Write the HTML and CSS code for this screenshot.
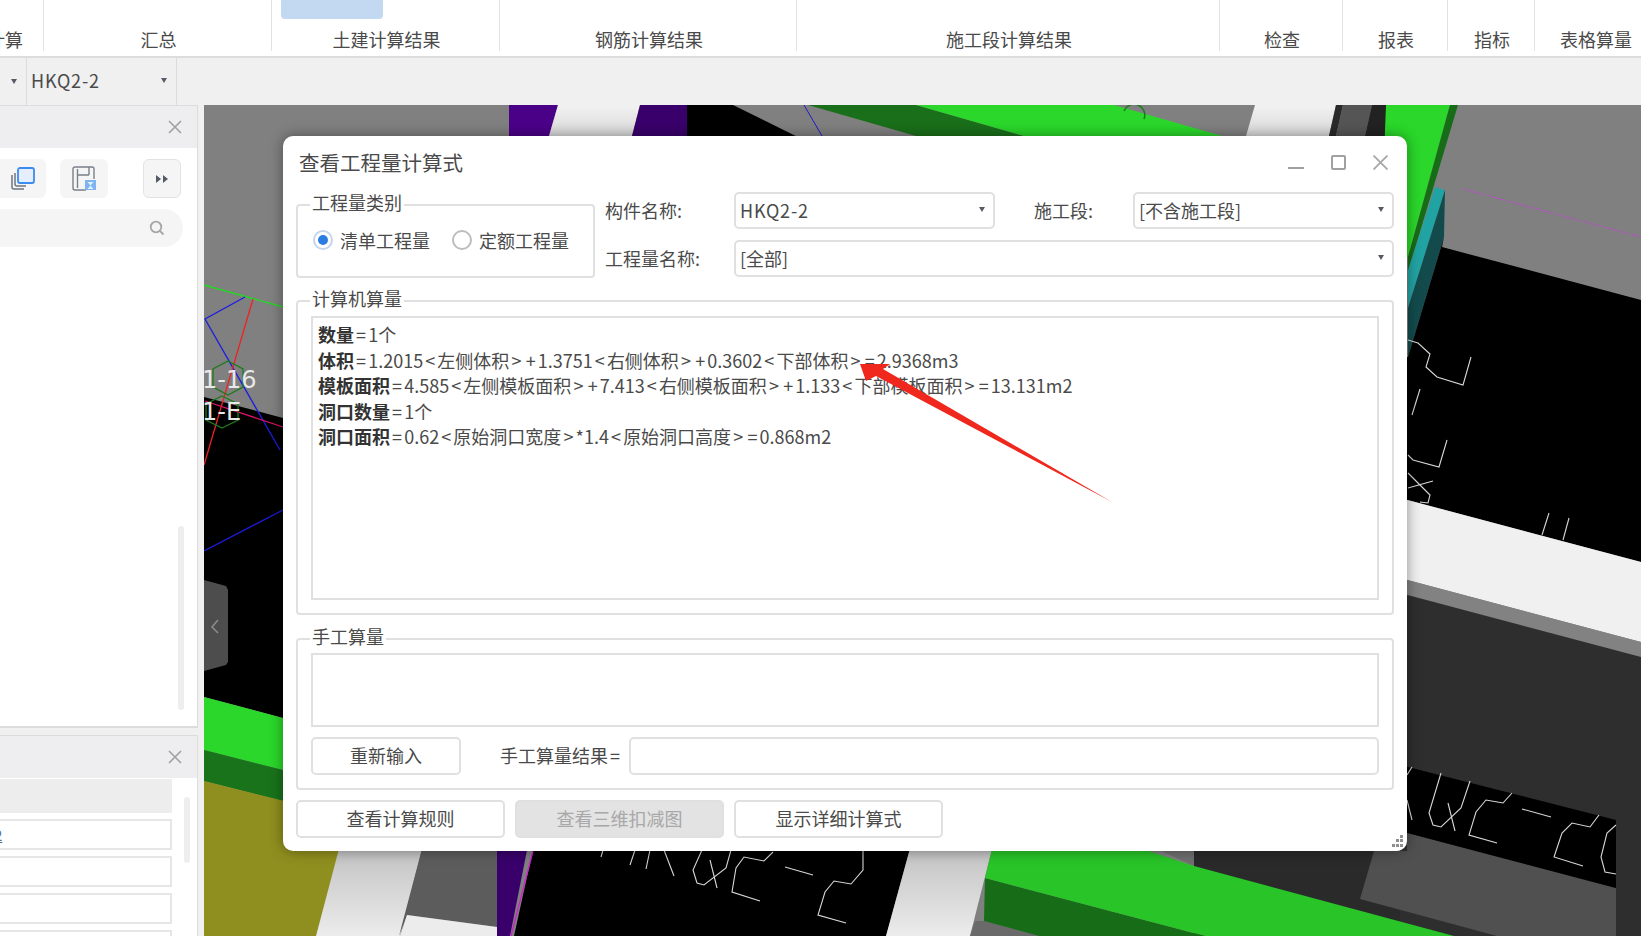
FILE: index.html
```html
<!DOCTYPE html>
<html lang="zh-CN">
<head>
<meta charset="utf-8">
<title>查看工程量计算式</title>
<link rel="stylesheet" href="styles.css">
</head>
<body>
<div class="app">
  <header class="ribbon">
    <div class="group g-calc"><span class="group-label">计算</span></div>
    <div class="group g-sum"><span class="group-label">汇总</span></div>
    <div class="group g-civil"><span class="ribbon-btn"></span><span class="group-label">土建计算结果</span></div>
    <div class="group g-steel"><span class="group-label">钢筋计算结果</span></div>
    <div class="group g-stage"><span class="group-label">施工段计算结果</span></div>
    <div class="group g-check"><span class="group-label">检查</span></div>
    <div class="group g-report"><span class="group-label">报表</span></div>
    <div class="group g-index"><span class="group-label">指标</span></div>
    <div class="group g-table"><span class="group-label">表格算量</span></div>
  </header>
  <div class="toolbar">
    <div class="tool-seg seg-a"><i class="caret"></i></div>
    <div class="tool-seg seg-b"><span class="code">HKQ2-2</span><i class="caret"></i></div>
  </div>
  <main class="main">
    <aside class="side">
      <section class="panel panel-top">
        <div class="panel-head">
          <svg class="x-icon" viewBox="0 0 14 14"><path d="M1 1L13 13M13 1L1 13" stroke="#a0a0a0" stroke-width="1.6" fill="none"/></svg>
        </div>
        <div class="panel-tools">
          <span class="tool-btn btn-copy">
            <svg width="26" height="26" viewBox="0 0 26 26"><path d="M3 9v12a2 2 0 0 0 2 2h10" stroke="#6f7580" stroke-width="1.5" fill="none"/><path d="M6 7v11a2 2 0 0 0 2 2h9" stroke="#6f7580" stroke-width="1.5" fill="none"/><rect x="9" y="2" width="16" height="15" rx="2" fill="#e4eefc" stroke="#3b8bf0" stroke-width="1.8"/></svg>
          </span>
          <span class="tool-btn btn-save">
            <svg width="26" height="26" viewBox="0 0 26 26"><path d="M15 24H4a2 2 0 0 1-2-2V3a2 2 0 0 1 2-2h17a2 2 0 0 1 2 2v10" stroke="#7a808a" stroke-width="1.4" fill="none"/><path d="M6.500 3v19M6.500 9H18M18 1v8" stroke="#7a808a" stroke-width="1.4" fill="none"/><rect x="14" y="14" width="11" height="10" fill="#7fb4f2"/><path d="M16.500 16h6l-3 3.500zM16.500 23l3-3.500 3 3.500z" fill="#e4f0fd"/></svg>
          </span>
          <span class="tool-btn btn-more">
            <svg width="12" height="10" viewBox="0 0 12 10"><path d="M0 1l5 4-5 4zM7 1l5 4-5 4z" fill="#555b66"/></svg>
          </span>
        </div>
        <div class="search">
          <svg width="16" height="16" viewBox="0 0 16 16"><circle cx="7" cy="7" r="5.300" stroke="#a6a6a6" stroke-width="1.800" fill="none"/><path d="M11 11l3.500 3.500" stroke="#a6a6a6" stroke-width="1.800"/></svg>
        </div>
        <span class="scroll scroll-a"></span>
      </section>
      <section class="panel panel-bottom">
        <div class="panel-head head-b">
          <svg class="x-icon" viewBox="0 0 14 14"><path d="M1 1L13 13M13 1L1 13" stroke="#a0a0a0" stroke-width="1.6" fill="none"/></svg>
        </div>
        <div class="prop-row prop-gray"></div>
        <div class="prop-row"><span class="prop-val">2</span></div>
        <div class="prop-row"></div>
        <div class="prop-row"></div>
        <div class="prop-row"></div>
        <span class="scroll scroll-b"></span>
      </section>
    </aside>
    <div class="canvas">
      <svg class="scene" viewBox="204 105 1437 831" width="1437" height="831">
        <defs>
          <linearGradient id="band" x1="0" y1="0" x2="0" y2="1"><stop offset="0" stop-color="#c0c0c0"/><stop offset="1" stop-color="#ececec"/></linearGradient>
          <linearGradient id="band2" x1="0" y1="0" x2="0" y2="1"><stop offset="0" stop-color="#f2f2f2"/><stop offset="1" stop-color="#d8d8d8"/></linearGradient>
        </defs>
        <rect x="204" y="105" width="1437" height="831" fill="#808080"/>
        <!-- top strip -->
        <polygon points="509,105 558,105 549,136 509,136" fill="#4b0088"/>
        <polygon points="558,105 640,105 632,136 549,136" fill="url(#band2)"/>
        <polygon points="640,105 687,105 687,136 632,136" fill="#39006b"/>
        <polygon points="687,105 733,105 844,160 687,160" fill="#000"/>
        <polygon points="808,105 916,105 1024,136 916,136" fill="#1a6f1a"/>
        <polygon points="916,105 1114,105 1222,136 1024,136" fill="#2ad72a"/>
        <polygon points="1255,105 1336,105 1329,136 1246,136" fill="url(#band2)"/>
        <polygon points="1336,105 1343,105 1336,136 1329,136" fill="#2a2a2a"/>
        <polygon points="1343,105 1372,105 1365,136 1336,136" fill="#555"/>
        <polygon points="1372,105 1393,105 1386,136 1365,136" fill="#222"/>
        <path d="M804 105L822 136" stroke="#1c1ccc" stroke-width="1" fill="none"/>
        <path d="M1124 111a10 10 0 0 1 20 8" stroke="#1c7a1c" stroke-width="1.5" fill="none"/>
        <!-- right side -->
        <polygon points="1386,105 1450,105 1408,257 1380,257" fill="#2ad72a"/>
        <polygon points="1450,105 1458,105 1408,272 1408,257" fill="#176c17"/>
        <polygon points="1435,187 1445,190 1408,308 1408,270" fill="#22a3a3"/>
        <polygon points="1445,190 1444,237 1408,357 1408,308" fill="#134b4d"/>
        <path d="M1463 189L1641 237" stroke="#b84fc8" stroke-width="1.200" stroke-dasharray="3 2" fill="none"/>
        <polygon points="1442,247 1641,300 1641,562 1400,498 1400,357 1408,357 1444,237" fill="#000"/>
        <polygon points="1400,498 1641,562 1641,642 1400,578" fill="#f0f0f0"/>
        <polygon points="1400,578 1641,642 1641,657 1400,593" fill="#828282"/>
        <polygon points="1400,593 1641,657 1641,936 1400,936" fill="#2e2e2e"/>
        <polygon points="1194,851 1400,851 1400,936 1400,936 1194,936" fill="#2a2a2a"/>
        <polygon points="1374,851 1407,851 1407,833 1616,888 1616,936 1497,936 1360,899" fill="#505050"/>
        <polygon points="1400,765 1616,820 1616,888 1400,831" fill="#000"/>
        <g fill="none" stroke="#d8d8d8" stroke-width="1.100">
          <path d="M1408 340L1418 343L1430 354L1426 367L1437 377L1463 385L1471 357"/>
          <path d="M1420 389L1412 415"/>
          <path d="M1447 440L1439 467L1413 460L1408 455"/>
          <path d="M1408 473L1430 495L1428 503L1420 502M1433 481L1408 488"/>
          <path d="M1549 513L1542 535M1569 518L1563 540"/>
          <path d="M1412 767L1407 775M1407 800L1412 820"/>
          <path d="M1441 773L1429 813L1433 825L1441 827L1461 808L1470 781M1448 803L1455 831"/>
          <path d="M1512 793L1503 803L1486 800L1476 812L1469 835L1497 843"/>
          <path d="M1522 809L1551 817"/>
          <path d="M1599 815L1590 827L1572 823L1562 833L1554 857L1583 866"/>
          <path d="M1616 825L1607 833L1601 857L1605 872L1616 874"/>
        </g>
        <!-- left side -->
        <polygon points="204,397 283,418 283,718 204,697" fill="#000"/>
        <polygon points="204,697 283,718 283,770 204,750" fill="#2ad72a"/>
        <polygon points="204,750 283,770 283,801 204,781" fill="#19731b"/>
        <polygon points="204,781 360,820 360,851 340,851 316,936 204,936" fill="#8f8f1f"/>
        <g fill="none" stroke-width="1.300">
          <path d="M204 285L283 307" stroke="#22d822"/>
          <path d="M245 297L205 319L280 450" stroke="#1c1ce0"/>
          <path d="M253 299L204 465" stroke="#ee2222"/>
          <path d="M205 401L283 427" stroke="#e0106a"/>
          <path d="M204 551L283 510" stroke="#1c1ce0"/>
          <polygon points="228,361 243,369 243,387 228,395 213,387 213,369" stroke="#1c7a1c"/>
          <polygon points="222,396 238,404 238,420 222,428 206,420 206,404" stroke="#1c7a1c"/>
        </g>
        <text class="scene-text" x="202" y="388">1-16</text>
        <text class="scene-text" x="202" y="420">1-E</text>
        <polygon points="204,580 226,586 228,590 228,662 226,665 204,671" fill="#4d4d4d"/>
        <path d="M218 620L212 627L218 633" stroke="#8c8c8c" stroke-width="1.500" fill="none"/>
        <!-- bottom strip -->
        <polygon points="340,845 423,845 400,936 316,936" fill="url(#band)"/>
        <polygon points="423,845 497,845 497,927 407,915 399,936" fill="#5c5c5c"/>
        <polygon points="407,915 497,927 497,936 400,936" fill="#ececec"/>
        <polygon points="497,845 528,845 510,936 497,936" fill="#39006b"/>
        <polygon points="534,845 911,845 886,936 514,936" fill="#000"/>
        <path d="M533 851L511 936" stroke="#d020d0" stroke-width="1.300" fill="none"/>
        <polygon points="911,845 993,845 970,936 886,936" fill="url(#band)"/>
        <polygon points="975,921 984,921 1039,936 970,936" fill="#6a6a6a"/>
        <polygon points="1148,845 1194,845 1194,866" fill="#707070"/>
        <polygon points="985,878 1205,936 1039,936 984,921" fill="#176c17"/>
        <polygon points="993,845 1130,845 1194,866 1454,936 1205,936 985,878" fill="#28c428"/>
        <g fill="none" stroke="#d8d8d8" stroke-width="1.100">
          <path d="M601 857L603 850M630 865L635 850M646 869L650 850M664 850L674 876"/>
          <path d="M702 850L693 870L697 883L704 885L726 868L731 850M710 860L717 888"/>
          <path d="M773 852L764 861L744 857L736 868L732 892L760 901"/>
          <path d="M785 867L813 875"/>
          <path d="M863 850L863 870L851 884L834 881L825 892L818 915L846 923"/>
        </g>
      </svg>
    </div>
  </main>

  <section class="dialog">
    <div class="dialog-title">
      <h1>查看工程量计算式</h1>
      <div class="win-btns">
        <svg width="16" height="15" viewBox="0 0 16 15"><path d="M0 13h16" stroke="#a0a0a0" stroke-width="2"/></svg>
        <svg width="15" height="15" viewBox="0 0 15 15"><rect x="1" y="1" width="13" height="13" rx="1" fill="none" stroke="#a0a0a0" stroke-width="2"/></svg>
        <svg width="15" height="15" viewBox="0 0 15 15"><path d="M0.500 0.500L14.500 14.500M14.500 0.500L0.500 14.500" stroke="#a8a8a8" stroke-width="1.800"/></svg>
      </div>
    </div>
    <div class="top-row">
      <fieldset class="box box-type">
        <legend>工程量类别</legend>
        <div class="radios">
          <span class="radio on"></span><span class="radio-text">清单工程量</span>
          <span class="radio second"></span><span class="radio-text">定额工程量</span>
        </div>
      </fieldset>
      <div class="fields">
        <div class="field-row">
          <span class="field-label">构件名称:</span>
          <div class="select sel-name"><span class="code">HKQ2-2</span><i class="caret"></i></div>
          <span class="field-label lbl-stage">施工段:</span>
          <div class="select sel-stage"><span>[不含施工段]</span><i class="caret"></i></div>
        </div>
        <div class="field-row">
          <span class="field-label">工程量名称:</span>
          <div class="select sel-all"><span>[全部]</span><i class="caret"></i></div>
        </div>
      </div>
    </div>
    <fieldset class="box box-auto">
      <legend>计算机算量</legend>
      <div class="formula">
        <p><b>数量</b><span class="op">=</span>1个</p>
        <p><b>体积</b><span class="op">=</span>1.2015<span class="op">&lt;</span>左侧体积<span class="op">&gt;</span><span class="op">+</span>1.3751<span class="op">&lt;</span>右侧体积<span class="op">&gt;</span><span class="op">+</span>0.3602<span class="op">&lt;</span>下部体积<span class="op">&gt;</span><span class="op">=</span>2.9368m3</p>
        <p><b>模板面积</b><span class="op">=</span>4.585<span class="op">&lt;</span>左侧模板面积<span class="op">&gt;</span><span class="op">+</span>7.413<span class="op">&lt;</span>右侧模板面积<span class="op">&gt;</span><span class="op">+</span>1.133<span class="op">&lt;</span>下部模板面积<span class="op">&gt;</span><span class="op">=</span>13.131m2</p>
        <p><b>洞口数量</b><span class="op">=</span>1个</p>
        <p><b>洞口面积</b><span class="op">=</span>0.62<span class="op">&lt;</span>原始洞口宽度<span class="op">&gt;</span>*1.4<span class="op">&lt;</span>原始洞口高度<span class="op">&gt;</span><span class="op">=</span>0.868m2</p>
      </div>
    </fieldset>
    <fieldset class="box box-manual">
      <legend>手工算量</legend>
      <div class="manual-input"></div>
      <div class="manual-row">
        <button class="btn btn-reset" type="button">重新输入</button>
        <span class="manual-label">手工算量结果<span class="op">=</span></span>
        <div class="manual-result"></div>
      </div>
    </fieldset>
    <div class="actions">
      <button class="btn btn-action" type="button">查看计算规则</button>
      <button class="btn btn-action btn-disabled" type="button">查看三维扣减图</button>
      <button class="btn btn-action" type="button">显示详细计算式</button>
    </div>
    <svg class="grip" width="13" height="13" viewBox="0 0 13 13" fill="#8f8f8f">
      <rect x="9" y="0" width="3" height="3"/>
      <rect x="5" y="4" width="3" height="3"/><rect x="9" y="4" width="3" height="3"/>
      <rect x="1" y="9" width="3" height="3"/><rect x="5" y="9" width="3" height="3"/><rect x="9" y="9" width="3" height="3"/>
    </svg>
  </section>

  <svg class="arrow" viewBox="850 355 270 155" width="270" height="155">
    <polygon points="860,364 890,364 883,369 1112,502 876,376 866,381" fill="#f0271d"/>
  </svg>
</div>
</body>
</html>
```

FILE: styles.css
```css
* { box-sizing: border-box; }
html, body { margin: 0; padding: 0; }
body {
  width: 1641px;
  height: 936px;
  overflow: hidden;
  background: #f0f0f0;
  color: #4a4a4a;
  font-family: "Noto Sans CJK SC", "Noto Sans", sans-serif;
  font-size: 18px;
}
.app { position: relative; width: 1641px; height: 936px; overflow: hidden; display: flex; flex-direction: column; }
.code { letter-spacing: .8px; }
.op { padding: 0 2.100px; }

/* ribbon */
.ribbon { height: 58px; flex: none; display: flex; background: #fff; border-bottom: 2px solid #dcdcdc; padding-bottom: 5px; overflow: hidden; }
.group { flex: none; height: 51px; display: flex; flex-direction: column; justify-content: flex-end; align-items: center; border-right: 1px solid #e2e2e2; }
.group-label { line-height: 24px; padding-left: 2px; white-space: nowrap; }
.g-calc { width: 44px; align-items: flex-end; padding-right: 20px; }
.g-sum { width: 228px; }
.g-civil { width: 228px; justify-content: space-between; }
.ribbon-btn { align-self: flex-start; width: 102px; height: 19px; margin-left: 9px; background: #c2d9f1; border-radius: 0 0 4px 4px; }
.g-steel { width: 297px; }
.g-stage { width: 423px; }
.g-check { width: 123px; }
.g-report { width: 105px; }
.g-index { width: 87px; }
.g-table { width: 120px; border-right: 0; }

/* toolbar */
.toolbar { height: 47px; flex: none; display: flex; background: #f0f0f0; }
.tool-seg { display: flex; align-items: center; justify-content: space-between; border-right: 1px solid #dcdcdc; height: 47px; }
.seg-a { width: 27px; padding: 0 9px 0 10px; justify-content: flex-end; }
.seg-b { width: 150px; padding: 0 9px 3px 4px; }
.caret { display: block; width: 0; height: 0; border-left: 3.5px solid transparent; border-right: 3.5px solid transparent; border-top: 5px solid #555b66; }

/* main */
.main { flex: 1; display: flex; min-height: 0; }
.side { width: 204px; flex: none; display: flex; flex-direction: column; gap: 7px; padding-right: 6px; }
.panel { position: relative; background: #fff; border-right: 1px solid #dcdcdc; overflow: hidden; }
.panel-top { height: 623px; border-bottom: 2px solid #dcdcdc; border-top: 1px solid #dcdcdc; }
.panel-bottom { flex: 1; border-top: 1px solid #dcdcdc; }
.panel-head { height: 42px; background: #eeeef0; display: flex; align-items: center; justify-content: flex-end; padding-right: 15px; }
.x-icon { width: 14px; height: 14px; display: block; }
.head-b { margin-bottom: 1px; }
.panel-tools { display: flex; margin-top: 11px; margin-left: -10px; }
.tool-btn { height: 39px; background: #f5f5f5; border-radius: 6px; display: flex; align-items: center; justify-content: center; flex: none; }
.btn-copy { width: 56px; padding-left: 8px; margin-right: 14px; }
.btn-save { width: 48px; margin-right: 35px; }
.btn-more { width: 38px; border: 1px solid #e3e3e3; }
.search { width: 203px; height: 38px; margin: 11px 0 0 -20px; border-radius: 19px; background: #f5f5f5; display: flex; align-items: center; justify-content: flex-end; padding-right: 18px; }
.scroll { position: absolute; width: 6px; background: #eeeeee; border-radius: 3px; }
.scroll-a { left: 178px; top: 420px; height: 184px; }
.scroll-b { left: 184px; top: 61px; height: 66px; }
.prop-row { width: 176px; height: 31px; margin: 6px 0 0 -4px; background: #fff; border: 2px solid #e6e6e6; font-size: 15px; line-height: 27px; overflow: hidden; }
.prop-gray { height: 34px; margin-top: 0; background: #ededed; border: 0; }
.prop-val { display: block; margin-left: -4px; color: #5a6a90; text-decoration: underline; }

/* canvas */
.canvas { flex: 1; min-width: 0; background: #808080; overflow: hidden; }
.scene { display: block; }
.scene-text { font-family: "DejaVu Sans", sans-serif; font-size: 24px; fill: #e8e8e8; }

/* dialog */
.dialog { position: absolute; left: 283px; top: 136px; width: 1124px; height: 715px; padding: 0 13px; background: #fff; border-radius: 10px; box-shadow: 0 0 14px rgba(0, 0, 0, .4); }
.dialog-title { height: 56px; margin: 0 6px 0 3px; display: flex; align-items: center; justify-content: space-between; }
.dialog-title h1 { margin: 0; padding-bottom: 4px; font-size: 20.500px; font-weight: 400; line-height: 52px; }
.win-btns { display: flex; gap: 27px; margin-bottom: 4px; }
.win-btns svg { display: block; }
.box { margin: 0; padding: 0; border: 2px solid #e0e0e0; border-radius: 4px; min-width: 0; }
.box legend { margin-left: 12px; padding: 0 2px; font-size: 18px; line-height: 15px; height: 20px; }
.top-row { display: flex; height: 85px; }
.box-type { width: 299px; height: 83px; margin-top: 3px; flex: none; }
.radios { display: flex; align-items: center; margin: 15px 0 0 15px; height: 20px; line-height: 20px; }
.radio { width: 20px; height: 20px; border-radius: 50%; border: 2px solid #bdbdbd; background: #fff; margin-right: 7px; flex: none; display: flex; align-items: center; justify-content: center; }
.radio.on { border-color: #c4d6ee; }
.radio.on::before { content: ""; width: 10px; height: 10px; border-radius: 50%; background: #2a7de1; }
.radio.second { margin-left: 22px; }
.radio-text { white-space: nowrap; }
.fields { flex: 1; display: flex; flex-direction: column; gap: 11px; margin-left: 10px; }
.field-row { display: flex; align-items: center; height: 37px; }
.field-label { width: 129px; flex: none; padding-bottom: 2px; white-space: nowrap; }
.lbl-stage { width: 99px; margin-left: 39px; }
.select { height: 37px; display: flex; align-items: center; justify-content: space-between; padding: 0 8px 2px 4px; border: 2px solid #e0e0e0; border-radius: 5px; background: #fff; white-space: nowrap; }
.sel-name { width: 261px; }
.sel-stage { width: 261px; }
.sel-all { flex: 1; }
.box-auto { height: 324px; margin-top: 14px; }
.formula { height: 284px; margin: 5px 13px 0; padding: 4px 5px; border: 2px solid #e0e0e0; line-height: 25.500px; }
.formula p { margin: 0; white-space: nowrap; }
.formula b { color: #333; font-weight: 700; }
.box-manual { height: 161px; margin-top: 14px; }
.manual-input { height: 74px; margin: 4px 13px 0; border: 2px solid #e0e0e0; }
.manual-row { display: flex; align-items: center; margin: 10px 13px 0; height: 38px; }
.btn { font: inherit; color: inherit; height: 38px; padding: 0 0 2px; background: #fff; border: 2px solid #e0e0e0; border-radius: 5px; white-space: nowrap; }
.btn-reset { width: 150px; }
.manual-label { margin-left: 39px; width: 129px; flex: none; padding-bottom: 2px; white-space: nowrap; }
.manual-result { flex: 1; height: 38px; border: 2px solid #e0e0e0; border-radius: 5px; }
.actions { display: flex; gap: 10px; margin-top: 10px; }
.btn-action { width: 209px; }
.btn-disabled { background: #e3e3e3; color: #a8a8a8; }
.grip { position: absolute; right: 3px; bottom: 3px; }
.arrow { position: absolute; left: 850px; top: 355px; }
```
